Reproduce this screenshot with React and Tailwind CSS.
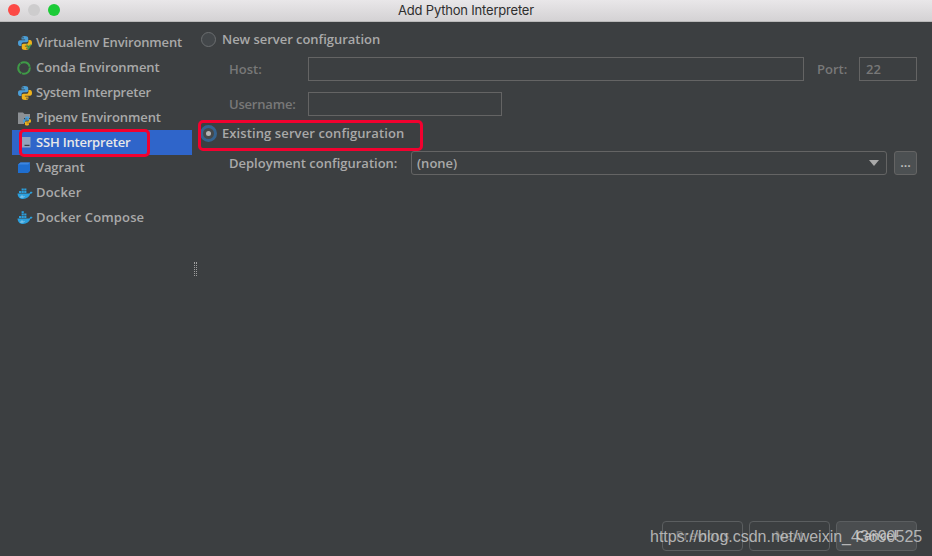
const F = { fontFamily: '"Open Sans", "Liberation Sans", sans-serif' };

const Py = ({ children }) => (
  <svg width="16" height="16" viewBox="0 0 16 16" className="shrink-0">
    <path d="M7.800 1C5 1 4.600 2 4.600 3v1.600h3.500v.6H3C1.700 5.200 1 6.200 1 8c0 1.800.7 3 2 3h1.500V9.300c0-1.200 1-2.100 2.200-2.100h2.800c1 0 1.700-.8 1.700-1.700V3c0-1.200-1.200-2-3.400-2z" fill="#4b9ed6" />
    <path d="M8.200 15c2.800 0 3.200-1 3.200-2v-1.600H7.900v-.6H13c1.300 0 2-1 2-2.800s-.7-3-2-3h-1.500v1.700c0 1.200-1 2.100-2.200 2.100H6.500c-1 0-1.700.8-1.700 1.700V13c0 1.200 1.200 2 3.400 2z" fill="#eeb31c" />
    <circle cx="6" cy="2.800" r=".7" fill="#3c3f41" />
    <circle cx="10" cy="13.200" r=".7" fill="#3c3f41" />
    {children}
  </svg>
);

const Whale = ({ tall }) => (
  <svg width="16" height="16" viewBox="0 0 16 16" className="shrink-0">
    <path d="M0.500 8.500H12c.6-.1 1-.6 1-1.300.7-.6 1.600-.4 2.500 0-.5 1-1.200 1.500-2.200 1.600C12.200 12 9.800 14 6 14 2.500 14 .8 11.800.500 8.500z" fill="#2c9fdc" />
    <path d="M2 6h2.200v2H2zM4.600 6h2.200v2H4.600zM7.200 6h2.200v2H7.200zM4.600 3.600h2.200v2H4.600zM7.200 3.600h2.200v2H7.200z" fill="#2c9fdc" />
    {tall ? <path d="M4.600 1.200h2.200v2H4.600z" fill="#2c9fdc" /> : null}
    <circle cx="5" cy="11" r=".6" fill="#e8f4fb" />
    <path d="M3 12c1.500.4 3 .3 4.500-.5" stroke="#e8f4fb" strokeWidth=".5" fill="none" />
  </svg>
);

const icons = {
  virtualenv: (
    <Py>
      <path d="M9 9.500l2.500 5.500 3-5.500h-1.600l-1.400 2.800-1-2.800z" fill="#3fa34d" />
    </Py>
  ),
  conda: (
    <svg width="16" height="16" viewBox="0 0 16 16" className="shrink-0">
      <circle cx="7" cy="8" r="5.800" fill="none" stroke="#3f9a47" strokeWidth="2" strokeDasharray="11 .6" />
    </svg>
  ),
  system: <Py />,
  pipenv: (
    <svg width="16" height="16" viewBox="0 0 16 16" className="shrink-0">
      <path d="M1 2.500h5l1.500 1.500H13v4H7v6H1z" fill="#8c9094" />
      <path d="M10 6.500c-1.800 0-2 .7-2 1.300v1h2.400v.4H7.200C6.400 9.200 6 9.800 6 11s.4 1.800 1.200 1.800H8v-1c0-.8.6-1.300 1.400-1.300h1.600c.7 0 1.100-.5 1.100-1.100V7.800c0-.8-.7-1.300-2.100-1.300z" fill="#4b9ed6" />
      <path d="M10 15.500c1.800 0 2-.7 2-1.300v-1H9.600v-.4h3.200c.8 0 1.200-.6 1.200-1.800s-.4-1.800-1.200-1.800H12v1c0 .8-.6 1.300-1.400 1.300H9c-.7 0-1.100.5-1.100 1.100v1.600c0 .8.700 1.300 2.100 1.300z" fill="#eeb31c" />
    </svg>
  ),
  ssh: (
    <svg width="16" height="16" viewBox="0 0 16 16" className="shrink-0">
      <rect x="3" y="2" width="10.500" height="10.500" fill="#93a3bd" />
      <path d="M2.500 4.500l2.800 1.500-2.800 1.500z" fill="#23272e" />
      <path d="M7.500 9.800H12.500v1H7.500z" fill="#23272e" />
    </svg>
  ),
  vagrant: (
    <svg width="16" height="16" viewBox="0 0 16 16" className="shrink-0">
      <path d="M3.500 2.500h9.500v8.500l-2 2H1V4.500z" fill="#1f6ecf" />
      <path d="M1 4.500h10l2-2H3.500z" fill="#3d86e0" />
    </svg>
  ),
  docker: <Whale />,
  compose: <Whale tall />,
};

const items = [
  ['virtualenv', 'Virtualenv Environment', 'tracking-[-0.14px]'],
  ['conda', 'Conda Environment', 'tracking-[-0.06px]'],
  ['system', 'System Interpreter', 'tracking-[-0.22px]'],
  ['pipenv', 'Pipenv Environment', 'tracking-[-0.12px]'],
  ['ssh', 'SSH Interpreter', 'tracking-[-0.2px]'],
  ['vagrant', 'Vagrant', 'tracking-[-0.14px]'],
  ['docker', 'Docker', 'tracking-[0.18px]'],
  ['compose', 'Docker Compose', 'tracking-[0.14px]'],
];

const Input = ({ className, children }) => (
  <div className={`h-6 border border-[#646464] flex items-center px-[6px] pt-[2px] text-[#787878] ${className}`}>{children}</div>
);

const FootBtn = ({ children, on }) => (
  <div className={`w-[81px] h-[30px] rounded-[4px] border border-[#5b5e60] flex items-center justify-center text-[13px] font-semibold ${on ? 'bg-[#4a4d4f] text-[#bbbbbb]' : 'text-[#6f6f6f]'}`}>
    {children}
  </div>
);

export default function App() {
  return (
    <div style={F} className="relative w-[932px] h-[556px] overflow-hidden flex flex-col bg-[#3c3f41] text-[13px] font-semibold text-[#a9a9a9]">
      <div style={{ fontFamily: 'Inter, "Liberation Sans", sans-serif' }} className="h-[22px] shrink-0 relative flex items-center justify-center bg-linear-to-b from-[#e9e7e9] to-[#d4d2d4] border-b border-[#b9b9b9] text-[#2e2e2e] font-normal text-[13px] tracking-[-0.2px]">
        <div className="absolute left-2 top-[4px] flex gap-2">
          <span className="w-3 h-3 rounded-full bg-[#fc4a46]" />
          <span className="w-3 h-3 rounded-full bg-[#cdcccd]" />
          <span className="w-3 h-3 rounded-full bg-[#1ccb37]" />
        </div>
        Add Python Interpreter
      </div>

      <div className="flex-1 flex min-h-0">
        <div className="w-[192px] shrink-0 pl-3 pt-[8px] flex flex-col">
          {items.map(([k, t, tr]) => (
            <div key={k} className={`h-[25px] flex items-center gap-[3px] pl-[5px] ${k === 'ssh' ? 'bg-[#2f65ca] text-[#e8e8e8]' : ''}`}>
              {icons[k]}
              <span className={`whitespace-nowrap ${tr}`}>{t}</span>
            </div>
          ))}
        </div>

        <div className="flex-1 relative flex flex-col pl-[9px] pr-[15px] pt-[5px] pb-[5px]">
          <div className="absolute left-[2px] top-[240px] w-[3px] h-[14px] border-x border-dotted border-[#a0a0a0]" />

          <div className="h-[25px] flex items-center gap-[6px]">
            <span className="w-[15px] h-[15px] rounded-full border border-[#6b6e70] bg-[#43474a]" />
            <span className="tracking-[-0.04px]">New server configuration</span>
          </div>

          <div className="mt-[5px] pl-[28px] flex items-center text-[#787878]">
            <span className="w-[79px] pt-[2px]">Host:</span>
            <Input className="flex-1" />
            <span className="ml-[13px] w-[42px] pt-[2px]">Port:</span>
            <Input className="w-[58px]">22</Input>
          </div>

          <div className="mt-[11px] pl-[28px] flex items-center text-[#787878]">
            <span className="w-[79px] pt-[2px] tracking-[-0.2px]">Username:</span>
            <Input className="w-[194px]" />
          </div>

          <div className="mt-[5px] h-[25px] flex items-center gap-[5px]">
            <span className="-ml-px w-[17px] h-[17px] rounded-full border-[3px] border-[#35638f] bg-[#45494b] flex items-center justify-center">
              <span className="w-[5px] h-[5px] rounded-full bg-[#b4b4b4]" />
            </span>
            <span className="tracking-[0.1px]">Existing server configuration</span>
          </div>

          <div className="mt-[5px] pl-[28px] flex items-center">
            <span className="w-[182px] pt-[2px]">Deployment configuration:</span>
            <div className="flex-1 h-6 rounded-[3px] border border-[#646464] flex items-center justify-between pl-[5px] pr-[7px]">
              <span className="pt-[2px]">(none)</span>
              <span className="w-0 h-0 border-x-[5px] border-x-transparent border-t-[6px] border-t-[#a9a9a9]" />
            </div>
            <div className="ml-[7px] w-[23px] h-6 rounded-[3px] border border-[#646464] bg-[#4c5052] flex items-center justify-center text-[#c0c0c0] leading-none pb-[2px]">...</div>
          </div>

          <div className="mt-auto flex justify-end gap-[6px]">
            <FootBtn>Previous</FootBtn>
            <FootBtn>Next</FootBtn>
            <FootBtn on>Cancel</FootBtn>
          </div>
        </div>
      </div>

      <div className="absolute left-[19px] top-[129px] w-[131px] h-[28px] rounded-[5px] border-[3px] border-[#f2012f]" />
      <div className="absolute left-[198px] top-[120px] w-[225px] h-[31px] rounded-[5px] border-[3px] border-[#f2012f]" />

      <div style={{ fontFamily: '"Liberation Sans", sans-serif' }} className="absolute left-[650px] top-[527px] text-[16px] font-normal leading-[20px] text-[#d2d2d2]/80 whitespace-nowrap">
        https://blog.csdn.net/weixin_43690525
      </div>
    </div>
  );
}
